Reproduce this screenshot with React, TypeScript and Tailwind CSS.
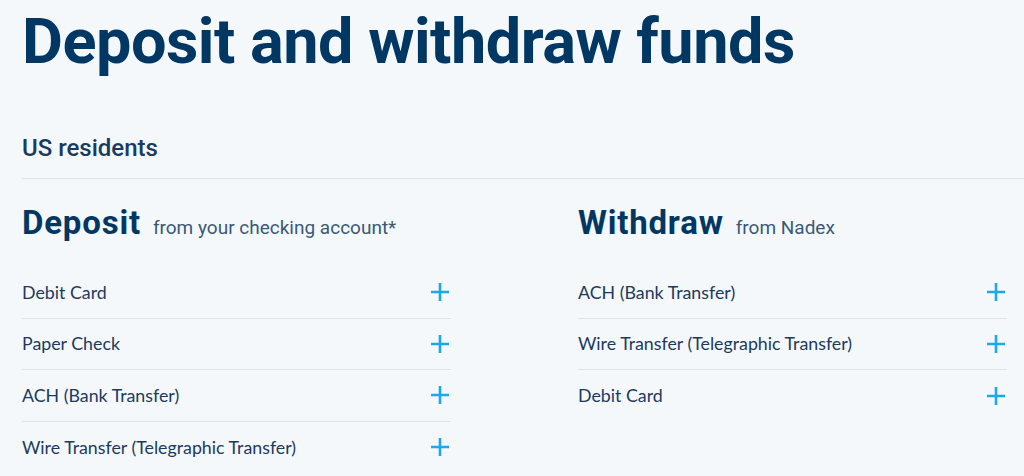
const deposit = ["Debit Card", "Paper Check", "ACH (Bank Transfer)", "Wire Transfer (Telegraphic Transfer)"];
const withdraw = ["ACH (Bank Transfer)", "Wire Transfer (Telegraphic Transfer)", "Debit Card"];

const head = { fontFamily: "Roboto, 'Liberation Sans', sans-serif" };
const body = { fontFamily: "Lato, 'Liberation Sans', sans-serif" };

const Plus = () => (
  <svg width="20" height="20" viewBox="0 0 20 20" className="shrink-0">
    <path d="M10 1v18M1 10h18" stroke="#1ba8ec" strokeWidth="2.6" />
  </svg>
);

const Column = ({ title, note, items }: { title: string; note: string; items: string[] }) => (
  <div className="w-[429px]">
    <div className="flex items-baseline gap-[12px] h-[50px]" style={head}>
      <h2 className="text-[33px] font-bold text-[#003763] tracking-[0.8px]">{title}</h2>
      <span className="text-[19px] text-[#3b5878]">{note}</span>
    </div>
    <ul className="mt-[19px]" style={body}>
      {items.map((item, i) => (
        <li
          key={item}
          className={`flex items-center justify-between h-[51.5px] pr-[1px] text-[17.8px] text-[#1b3a5e] ${
            i < items.length - 1 ? "border-b border-[#dfe4ea]" : ""
          }`}
        >
          <span>{item}</span>
          <Plus />
        </li>
      ))}
    </ul>
  </div>
);

export default function App() {
  return (
    <div className="w-[1024px] h-[476px] overflow-hidden bg-[#f5f8fb] pl-[22px]">
      <h1 className="pt-[6px] text-[63px] leading-[72px] font-bold text-[#003763] tracking-[-0.5px]" style={head}>
        Deposit and withdraw funds
      </h1>
      <div className="mt-[54px] pb-[14px] border-b border-[#dfe4ea]" style={head}>
        <h3 className="text-[24px] leading-[32px] font-medium text-[#1a3b60]">US residents</h3>
      </div>
      <div className="flex gap-[127px] mt-[19px]">
        <Column title="Deposit" note="from your checking account*" items={deposit} />
        <Column title="Withdraw" note="from Nadex" items={withdraw} />
      </div>
    </div>
  );
}
